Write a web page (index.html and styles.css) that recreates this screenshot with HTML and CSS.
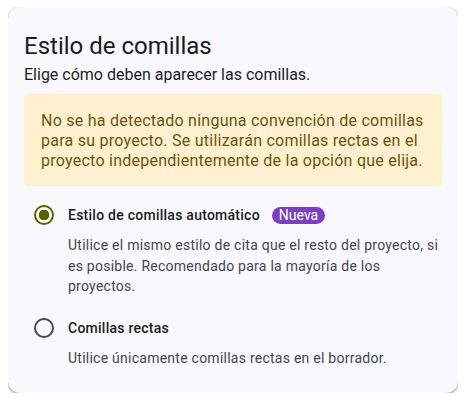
FILE: index.html
```html
<!DOCTYPE html>
<html lang="es">
<head>
<meta charset="utf-8">
<link rel="stylesheet" href="styles.css">
</head>
<body>
<section class="card">
  <h1 class="title">Estilo de comillas</h1>
  <p class="subtitle">Elige cómo deben aparecer las comillas.</p>
  <div class="alert">No se ha detectado ninguna convención de comillas para su proyecto. Se utilizarán comillas rectas en el proyecto independientemente de la opción que elija.</div>
  <div class="options">
    <div class="option">
      <div class="row">
        <span class="radio checked"></span>
        <span class="label">Estilo de comillas automático</span>
        <span class="badge">Nueva</span>
      </div>
      <p class="desc">Utilice el mismo estilo de cita que el resto del proyecto, si es posible. Recomendado para la mayoría de los proyectos.</p>
    </div>
    <div class="option">
      <div class="row">
        <span class="radio"></span>
        <span class="label">Comillas rectas</span>
      </div>
      <p class="desc">Utilice únicamente comillas rectas en el borrador.</p>
    </div>
  </div>
</section>
</body>
</html>
```

FILE: styles.css
```css
html, body {
  background: #ffffff;
}
body {
  margin: 7px 8px;
  font-family: Roboto, "Liberation Sans", sans-serif;
  color: #1b1b1f;
}
.card {
  width: 450px;
  box-sizing: border-box;
  background: #f8f8fd;
  border-radius: 12px;
  padding: 23px 16px 25px;
  box-shadow: 0 1px 2px rgba(0,0,0,0.3), 0 1px 3px 1px rgba(0,0,0,0.15);
}
.title {
  margin: 0;
  font-size: 24px;
  line-height: 32px;
  font-weight: 400;
  color: #1b1b1f;
}
.subtitle {
  margin: 1px 0 0;
  font-size: 16px;
  line-height: 24px;
  color: #1b1b1f;
}
.alert {
  margin-top: 7px;
  background: #fff0cf;
  color: #6b5310;
  border-radius: 4px;
  padding: 17px 16px 15px 17px;
  font-size: 16px;
  line-height: 20px;
  letter-spacing: 0.25px;
}
.options {
  margin-top: 9px;
  display: flex;
  flex-direction: column;
  gap: 11px;
}
.row {
  display: flex;
  align-items: center;
  height: 40px;
}
.radio {
  width: 40px;
  height: 40px;
  display: flex;
  align-items: center;
  justify-content: center;
  margin-right: 4px;
  flex: none;
}
.radio::before {
  content: "";
  width: 16px;
  height: 16px;
  border: 2px solid #45464f;
  border-radius: 50%;
  box-sizing: content-box;
}
.radio.checked::before {
  border-color: #586400;
  background: radial-gradient(circle, #586400 0 5px, transparent 5.5px);
}
.label {
  font-size: 14px;
  font-weight: 500;
  letter-spacing: 0.25px;
  color: #1b1b1f;
}
.badge {
  margin-left: 12px;
  background: #7b40bd;
  color: #ffffff;
  font-size: 14px;
  line-height: 17px;
  padding: 0 7px;
  border-radius: 9px;
}
.desc {
  margin: 0;
  padding-left: 44px;
  font-size: 14px;
  line-height: 20.5px;
  letter-spacing: 0.25px;
  color: #44464f;
}
```
